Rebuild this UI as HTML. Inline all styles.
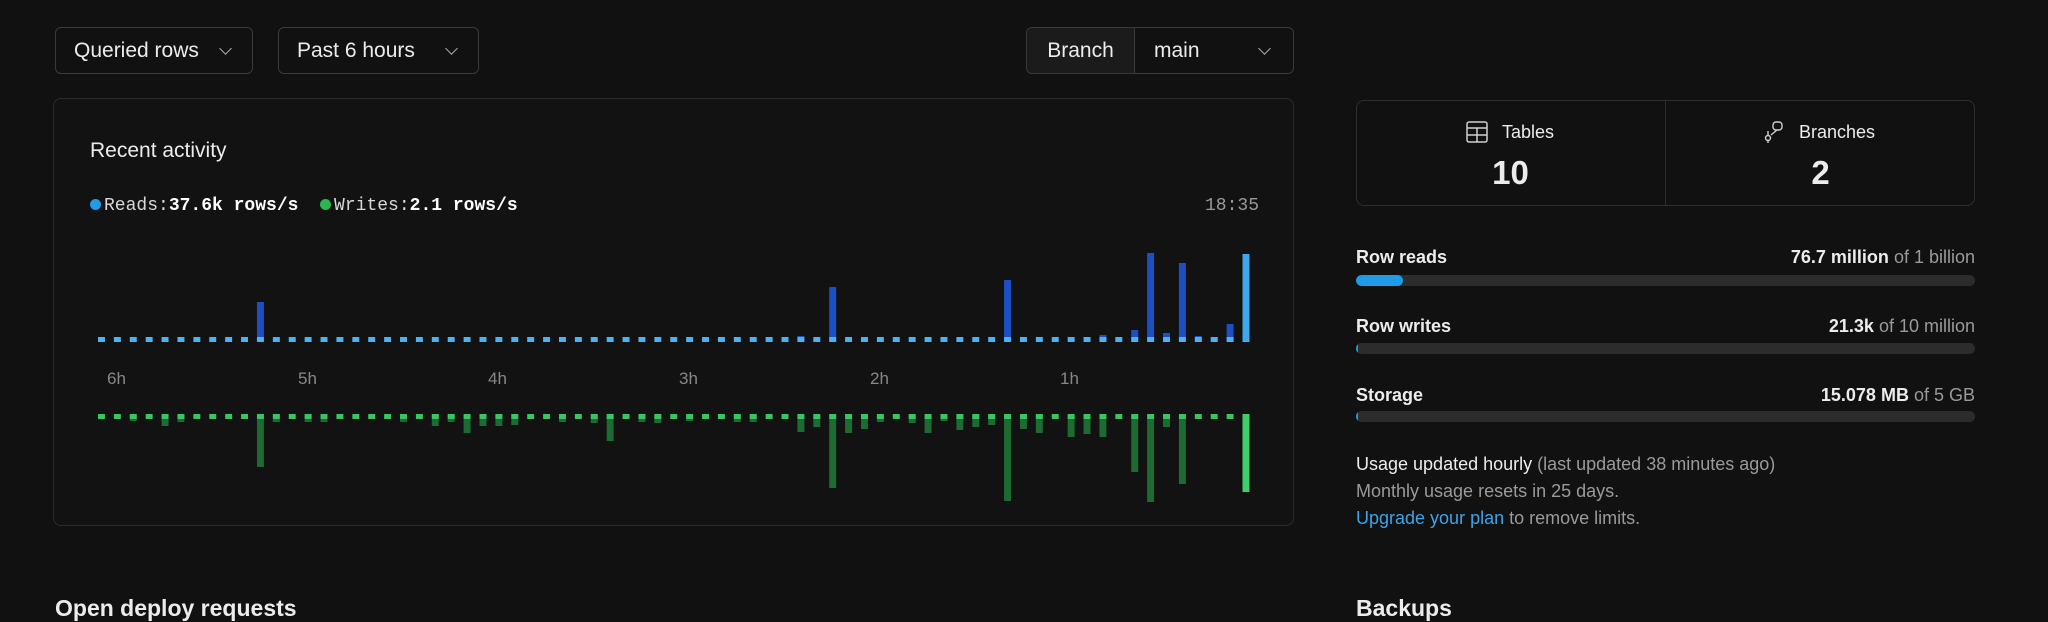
<!DOCTYPE html>
<html><head><meta charset="utf-8"><style>
*{box-sizing:border-box;margin:0;padding:0}
body{width:2048px;height:611px;overflow:hidden;background:#111111;font-family:"Liberation Sans",sans-serif;color:#ececec;position:relative}
.a{position:absolute}
.dd{position:absolute;top:27px;height:47px;border:1px solid #3a3a3a;border-radius:6px;font-size:21px;line-height:45px;padding-left:18px;color:#ececec}
.chev{position:absolute;top:16px;width:9px;height:9px;border-right:1.5px solid #aaa;border-bottom:1.5px solid #aaa;transform:rotate(45deg)}
.lbl{font-size:18px;font-weight:bold;color:#ececec}
.val{font-size:18px;color:#9a9a9a;text-align:right}
.val b{color:#ececec}
.track{position:absolute;left:1356px;width:619px;height:11px;border-radius:6px;background:#2c2c2c;overflow:hidden}
.fill{height:100%;background:#1f9be8;border-radius:6px}
.mono{font-family:"Liberation Mono",monospace;font-size:18px}
</style></head><body>
<div class="dd" style="left:55px;width:198px">Queried rows<span class="chev" style="left:165px"></span></div>
<div class="dd" style="left:278px;width:201px">Past 6 hours<span class="chev" style="left:168px"></span></div>
<div class="dd" style="left:1026px;width:268px;padding-left:0">
<div class="a" style="left:0;top:0;width:108px;height:45px;background:#1b1b1b;border-right:1px solid #3a3a3a;border-radius:6px 0 0 6px;text-align:center">Branch</div>
<div class="a" style="left:109px;top:0;padding-left:18px">main</div>
<span class="chev" style="left:233px"></span></div>

<div class="a" style="left:53px;top:98px;width:1241px;height:428px;border:1px solid #2b2b2b;border-radius:8px;background:#121212"></div>
<div class="a" style="left:90px;top:139px;font-size:21px">Recent activity</div>
<div class="a mono" style="left:90px;top:196px;color:#d8d8d8"><span style="display:inline-block;width:11px;height:11px;border-radius:50%;background:#1f9be8;margin-right:3px"></span>Reads:<b style="color:#fff">37.6k rows/s</b>&nbsp;&nbsp;<span style="display:inline-block;width:11px;height:11px;border-radius:50%;background:#2db552;margin-right:3px"></span>Writes:<b style="color:#fff">2.1 rows/s</b></div>
<div class="a mono" style="left:1200px;top:196px;color:#999;width:59px;text-align:right">18:35</div>

<svg class="a" style="left:0;top:0" width="2048" height="611">
<defs>
<pattern id="pb" x="98" y="337" width="16" height="5" patternUnits="userSpaceOnUse"><rect width="7" height="5" fill="#4cb2f2"/></pattern>
<pattern id="pg" x="98" y="414" width="16" height="5" patternUnits="userSpaceOnUse"><rect width="7" height="5" fill="#3bc462"/></pattern>
</defs>
<g transform="translate(98 0) scale(0.9935 1) translate(-98 0)">
<g fill="#1d4fc4">
<rect x="258" y="302" width="7" height="39"/><rect x="802" y="336" width="7" height="5"/><rect x="834" y="287" width="7" height="54"/><rect x="1010" y="280" width="7" height="61"/><rect x="1106" y="335" width="7" height="6"/><rect x="1138" y="330" width="7" height="11"/><rect x="1154" y="253" width="7" height="88"/><rect x="1170" y="333" width="7" height="8"/><rect x="1186" y="263" width="7" height="78"/><rect x="1202" y="336" width="7" height="5"/><rect x="1218" y="337" width="7" height="4"/><rect x="1234" y="324" width="7" height="17"/>
</g>
<rect x="98" y="337" width="1159" height="5" fill="url(#pb)"/>
<rect x="1250" y="254" width="7" height="87" fill="#3ea8ef"/>
<g fill="#1d6b33">
<rect x="130" y="414" width="7" height="7"/><rect x="162" y="414" width="7" height="12"/><rect x="178" y="414" width="7" height="8"/><rect x="258" y="414" width="7" height="53"/><rect x="274" y="414" width="7" height="8"/><rect x="306" y="414" width="7" height="8"/><rect x="322" y="414" width="7" height="8"/><rect x="402" y="414" width="7" height="8"/><rect x="434" y="414" width="7" height="12"/><rect x="450" y="414" width="7" height="8"/><rect x="466" y="414" width="7" height="19"/><rect x="482" y="414" width="7" height="12"/><rect x="498" y="414" width="7" height="12"/><rect x="514" y="414" width="7" height="11"/><rect x="562" y="414" width="7" height="8"/><rect x="594" y="414" width="7" height="9"/><rect x="610" y="414" width="7" height="27"/><rect x="642" y="414" width="7" height="8"/><rect x="658" y="414" width="7" height="9"/><rect x="690" y="414" width="7" height="7"/><rect x="738" y="414" width="7" height="8"/><rect x="754" y="414" width="7" height="8"/><rect x="802" y="414" width="7" height="18"/><rect x="818" y="414" width="7" height="13"/><rect x="834" y="414" width="7" height="74"/><rect x="850" y="414" width="7" height="19"/><rect x="866" y="414" width="7" height="15"/><rect x="882" y="414" width="7" height="8"/><rect x="914" y="414" width="7" height="9"/><rect x="930" y="414" width="7" height="19"/><rect x="946" y="414" width="7" height="7"/><rect x="962" y="414" width="7" height="16"/><rect x="978" y="414" width="7" height="13"/><rect x="994" y="414" width="7" height="11"/><rect x="1010" y="414" width="7" height="87"/><rect x="1026" y="414" width="7" height="15"/><rect x="1042" y="414" width="7" height="19"/><rect x="1074" y="414" width="7" height="23"/><rect x="1090" y="414" width="7" height="20"/><rect x="1106" y="414" width="7" height="23"/><rect x="1138" y="414" width="7" height="58"/><rect x="1154" y="414" width="7" height="88"/><rect x="1170" y="414" width="7" height="13"/><rect x="1186" y="414" width="7" height="70"/>
</g>
<rect x="98" y="414" width="1159" height="5" fill="url(#pg)"/>
<rect x="1250" y="414" width="7" height="78" fill="#3dd068"/>
</g>
<g fill="#888" font-size="17" font-family="Liberation Sans">
<text x="107" y="384">6h</text><text x="298" y="384">5h</text><text x="488" y="384">4h</text><text x="679" y="384">3h</text><text x="870" y="384">2h</text><text x="1060" y="384">1h</text></g>
</svg>

<div class="a" style="left:55px;top:595px;font-size:23px;font-weight:bold">Open deploy requests</div>

<div class="a" style="left:1356px;top:100px;width:619px;height:106px;border:1px solid #2f2f2f;border-radius:8px"></div>
<div class="a" style="left:1665px;top:101px;width:1px;height:104px;background:#2f2f2f"></div>
<svg class="a" style="left:1466px;top:121px" width="22" height="22" viewBox="0 0 22 22" fill="none" stroke="#cfcfcf" stroke-width="1.5"><rect x="1" y="1" width="20" height="20" rx="2"/><path d="M1 7H21M1 14H21M11 7V21"/></svg>
<div class="a" style="left:1502px;top:122px;font-size:18px">Tables</div>
<svg class="a" style="left:1764px;top:121px" width="20" height="22" viewBox="0 0 20 22" fill="none" stroke="#cfcfcf" stroke-width="1.4"><circle cx="4" cy="17" r="2.5"/><path d="M4 10V14.5M4 19.5V22"/><rect x="9" y="1" width="9" height="8" rx="3"/><path d="M13 9L7 14"/></svg>
<div class="a" style="left:1799px;top:122px;font-size:18px">Branches</div>
<div class="a" style="left:1356px;width:309px;top:154px;text-align:center;font-size:33px;font-weight:bold">10</div>
<div class="a" style="left:1666px;width:309px;top:154px;text-align:center;font-size:33px;font-weight:bold">2</div>

<div class="a lbl" style="left:1356px;top:247px">Row reads</div>
<div class="a val" style="left:1600px;width:375px;top:247px"><b>76.7 million</b> of 1 billion</div>
<div class="track" style="top:275px"><div class="fill" style="width:47px"></div></div>
<div class="a lbl" style="left:1356px;top:316px">Row writes</div>
<div class="a val" style="left:1600px;width:375px;top:316px"><b>21.3k</b> of 10 million</div>
<div class="track" style="top:343px"><div class="fill" style="width:2px"></div></div>
<div class="a lbl" style="left:1356px;top:385px">Storage</div>
<div class="a val" style="left:1600px;width:375px;top:385px"><b>15.078 MB</b> of 5 GB</div>
<div class="track" style="top:411px"><div class="fill" style="width:2px"></div></div>

<div class="a" style="left:1356px;top:451px;font-size:18px;line-height:27px;color:#9a9a9a">
<div><span style="color:#ececec">Usage updated hourly</span> (last updated 38 minutes ago)</div>
<div>Monthly usage resets in 25 days.</div>
<div><span style="color:#3ea3e8">Upgrade your plan</span> to remove limits.</div>
</div>
<div class="a" style="left:1356px;top:595px;font-size:23px;font-weight:bold">Backups</div>
</body></html>
